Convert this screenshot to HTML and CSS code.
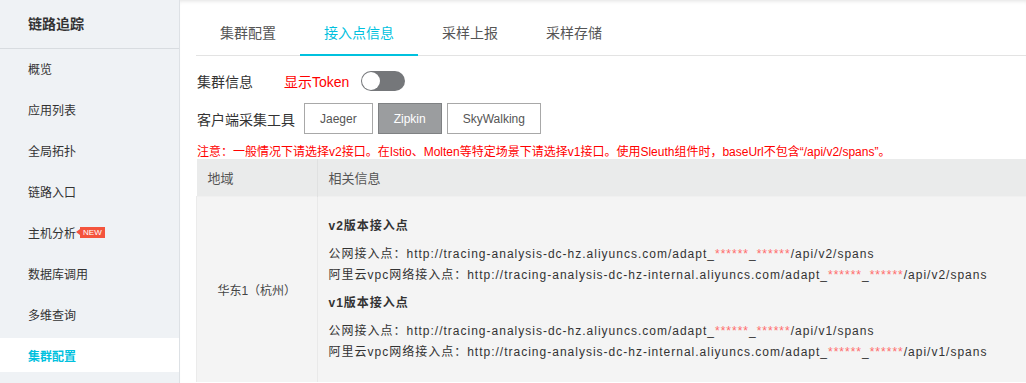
FILE: index.html
```html
<!DOCTYPE html>
<html lang="zh-CN">
<head>
  <meta charset="UTF-8">
  <title>链路追踪 - 集群配置</title>
  <link rel="stylesheet" href="styles.css">
</head>
<body>

  <div class="app">
    <div class="sidebar">
      <div class="side-title">链路追踪</div>
      <ul class="menu">
        <li>概览</li>
        <li>应用列表</li>
        <li>全局拓扑</li>
        <li>链路入口</li>
        <li>主机分析<span class="badge">NEW</span></li>
        <li>数据库调用</li>
        <li>多维查询</li>
        <li class="active">集群配置</li>
      </ul>
    </div>

    <div class="main">
      <div class="tabs">
        <div class="tab">集群配置</div>
        <div class="tab active">接入点信息</div>
        <div class="tab">采样上报</div>
        <div class="tab">采样存储</div>
      </div>

      <div class="row">
        <span class="label">集群信息</span>
        <span class="token">显示Token</span>
        <span class="switch"><span class="knob"></span></span>
      </div>

      <div class="row">
        <span class="label">客户端采集工具</span>
        <div class="btn-group">
          <button class="btn">Jaeger</button>
          <button class="btn selected">Zipkin</button>
          <button class="btn">SkyWalking</button>
        </div>
      </div>

      <p class="notice">注意：一般情况下请选择v2接口。在Istio、Molten等特定场景下请选择v1接口。使用Sleuth组件时，baseUrl不包含“/api/v2/spans”。</p>

      <table class="info-table">
        <thead>
          <tr>
            <th class="col-region">地域</th>
            <th>相关信息</th>
          </tr>
        </thead>
        <tbody>
          <tr>
            <td class="col-region region">华东1（杭州）</td>
            <td class="detail">
              <div class="group">
                <div class="group-title">v2版本接入点</div>
                <div class="line">公网接入点：http://tracing-analysis-dc-hz.aliyuncs.com/adapt_<span class="mask">******</span>_<span class="mask">******</span>/api/v2/spans</div>
                <div class="line">阿里云vpc网络接入点：http://tracing-analysis-dc-hz-internal.aliyuncs.com/adapt_<span class="mask">******</span>_<span class="mask">******</span>/api/v2/spans</div>
              </div>
              <div class="group">
                <div class="group-title">v1版本接入点</div>
                <div class="line">公网接入点：http://tracing-analysis-dc-hz.aliyuncs.com/adapt_<span class="mask">******</span>_<span class="mask">******</span>/api/v1/spans</div>
                <div class="line">阿里云vpc网络接入点：http://tracing-analysis-dc-hz-internal.aliyuncs.com/adapt_<span class="mask">******</span>_<span class="mask">******</span>/api/v1/spans</div>
              </div>
            </td>
          </tr>
        </tbody>
      </table>
    </div>
  </div>

</body>
</html>
```

FILE: styles.css
```css
body {
  margin: 0;
  font-family: "Liberation Sans", Arial, "Noto Sans CJK SC", sans-serif;
  font-size: 12px;
  color: #333;
  background: #fff;
  overflow: hidden;
}
.app {
  display: flex;
  height: 383px;
}

/* sidebar */
.sidebar {
  width: 179px;
  flex-shrink: 0;
  background-color: #eff2f5;
  border-right: 1px solid #dde1e5;
}
.side-title {
  height: 48px;
  line-height: 48px;
  padding-left: 28px;
  font-size: 14px;
  font-weight: bold;
  color: #333;
  border-bottom: 1px solid #d8dce0;
}
.menu {
  list-style: none;
  margin: 0;
  padding: 2px 0 0;
}
.menu li {
  display: flex;
  align-items: center;
  height: 34px;
  margin-bottom: 7px;
  padding-left: 28px;
  font-size: 12px;
  color: #333;
}
.menu li.active {
  background: #fff;
  color: #00c1de;
  font-weight: bold;
}
.badge {
  position: relative;
  margin-left: 4px;
  padding: 0 3px;
  height: 11px;
  line-height: 11px;
  font-size: 8px;
  color: #fff;
  background: #f4543d;
}
.badge::before {
  content: "";
  position: absolute;
  left: -4px;
  top: 2px;
  border-top: 3.5px solid transparent;
  border-bottom: 3.5px solid transparent;
  border-right: 4px solid #f4543d;
}

/* main */
.main {
  flex: 1;
  min-width: 0;
  padding: 14px 0 0 16px;
  box-shadow: inset 0 4px 4px -3px rgba(0, 0, 0, 0.12);
}
.tabs {
  display: flex;
  border-bottom: 1px solid #e3e3e3;
}
.tab {
  height: 40px;
  line-height: 38px;
  padding: 0 24px;
  font-size: 14px;
  color: #555;
  border-bottom: 2px solid transparent;
  margin-bottom: -1px;
}
.tab.active {
  color: #00c1de;
  border-bottom-color: #00c1de;
}

.row {
  display: flex;
  align-items: center;
  padding-left: 1px;
  font-size: 14px;
}
.tabs + .row {
  margin-top: 14px;
  height: 22px;
}
.row + .row {
  margin-top: 11px;
}
.label {
  color: #333;
}
.token {
  margin-left: 31px;
  color: #ff0000;
}
.switch {
  position: relative;
  width: 44px;
  height: 20px;
  margin-left: 12px;
  border-radius: 10px;
  background: #75777a;
}
.knob {
  position: absolute;
  left: 1px;
  top: 1px;
  width: 18px;
  height: 18px;
  border-radius: 50%;
  background: #fff;
}

.btn-group {
  display: flex;
  gap: 5px;
  margin-left: 9px;
}
.btn {
  height: 31px;
  padding: 0 15px;
  font-family: "Liberation Sans", Arial, sans-serif;
  font-size: 12px;
  color: #555;
  background: #fff;
  border: 1px solid #a8a8a8;
}
.btn.selected {
  color: #fff;
  background: #9b9d9f;
  border-color: #7f8183;
}

.notice {
  margin: 11px 0 0;
  padding-left: 1px;
  line-height: 14px;
  color: #ff0000;
}

/* table */
.info-table {
  margin-top: 0;
  width: 100%;
  border-collapse: collapse;
}
.info-table th {
  height: 37px;
  padding: 0 11px;
  text-align: left;
  font-size: 13px;
  font-weight: normal;
  color: #555;
  background: #eaebeb;
}
.info-table td {
  background: #f4f4f4;
  border-top: 1px solid #f0f0f0;
}
.col-region {
  width: 98px;
  border-right: 1px solid #e0e1e1;
}
td.col-region {
  border-left: 1px solid #ebebeb;
  border-right-color: #e9e9e9;
}
.region {
  text-align: center;
  color: #444;
}
.detail {
  padding: 19px 11px;
  letter-spacing: 1px;
  color: #333;
}
.group + .group {
  margin-top: 7px;
}
.group-title {
  line-height: 21px;
  margin-bottom: 7px;
  font-weight: bold;
}
.line {
  line-height: 21px;
  white-space: nowrap;
}
.mask {
  color: #ff6c6c;
}
```
